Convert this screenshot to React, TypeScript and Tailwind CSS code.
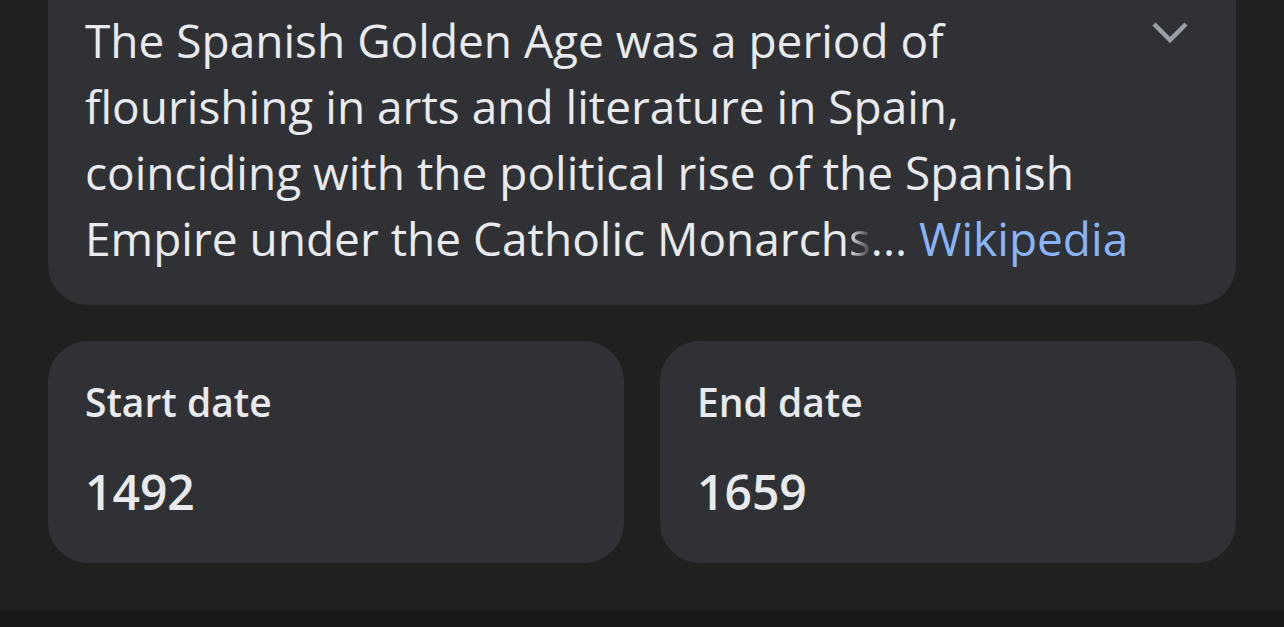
export default function App() {
  return (
    <div
      className="relative h-[627px] w-[1284px] overflow-hidden bg-[#202020]"
      style={{ fontFamily: "'Open Sans', Roboto, sans-serif" }}
    >
      <div className="px-12">
        <div className="relative -mt-10 rounded-[40px] bg-[#303134] pl-[37px] pr-[90px] pt-[47px] pb-[34px]">
          <p className="text-[46px] leading-[66px] text-[#e8eaed]">
            The Spanish Golden Age was a period of flourishing in arts and literature in Spain, coinciding with the
            political rise of the Spanish Empire under the Catholic Monarch
            <span className="bg-gradient-to-r from-[#e8eaed] to-[#3a3b3e] bg-clip-text text-transparent">s</span>
            ... <span className="text-[#8ab4f8]">Wikipedia</span>
          </p>
          <svg
            className="absolute right-[46px] top-[60px] h-[26px] w-[40px]"
            viewBox="0 0 40 26"
            fill="none"
            stroke="#9aa0a6"
            strokeWidth="4.5"
          >
            <path d="M4 4L20 20L36 4" />
          </svg>
        </div>
        <div className="mt-9 grid grid-cols-2 gap-9">
          {[
            ["Start date", "1492"],
            ["End date", "1659"],
          ].map(([label, value]) => (
            <div key={label} className="h-[222px] rounded-[40px] bg-[#303134] px-[37px] pt-[36px]">
              <div className="text-[39px] leading-[50px] font-semibold text-[#e8eaed]">{label}</div>
              <div className="mt-[38px] text-[48px] leading-[54px] font-semibold text-[#e8eaed]">{value}</div>
            </div>
          ))}
        </div>
      </div>
      <div className="absolute bottom-0 left-0 h-4 w-full bg-[#171717]" />
    </div>
  );
}
